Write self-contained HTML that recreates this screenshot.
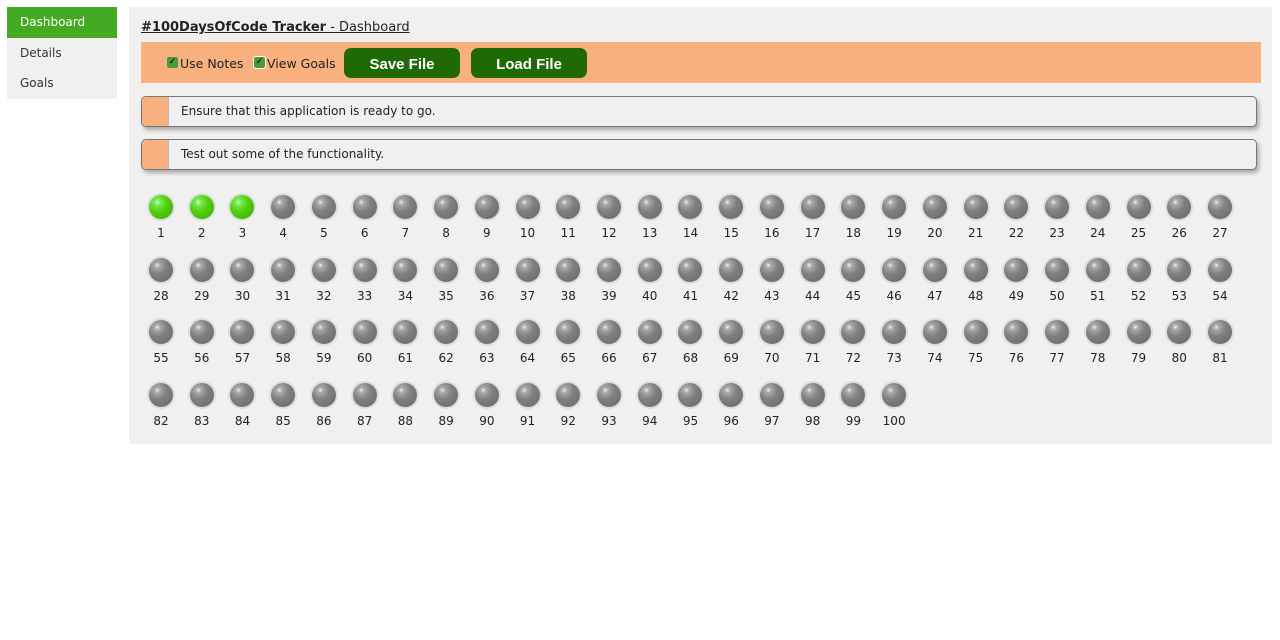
<!DOCTYPE html>
<html><head><style>
*{box-sizing:border-box}
body{margin:0;background:#fff;font-family:"DejaVu Sans",Verdana,sans-serif;font-size:12px;color:#222;width:1280px;height:640px;position:relative;overflow:hidden}
.nav{position:absolute;left:7px;top:7px;width:110px;background:#f0f0f0}
.nav div{height:30.5px;line-height:30px;padding-left:13px;color:#333;font-size:12px}
.nav .act{background:#44aa22;color:#fff}
.main{position:absolute;left:129px;top:7px;width:1143px;height:437px;background:#f0f0f0}
.title{position:absolute;left:12px;top:13px;font-size:13px;text-decoration:underline}
.bar{position:absolute;left:12px;top:35px;width:1120px;height:41px;background:#f8b07e}
.cb{position:absolute;top:15px;width:11px;height:11px;background:#4a9a3a;border-radius:2px;color:#000;font-size:9px;line-height:11px;text-align:center}
.lbl{position:absolute;top:14px;font-size:12.5px;color:#222}
.btn{position:absolute;top:6px;width:116px;height:30px;background:#1f6a06;border-radius:7px;color:#fff;font-family:"Liberation Sans",Arial,sans-serif;font-weight:bold;font-size:15px;text-align:center;line-height:33px}
.card{position:absolute;left:12px;width:1116px;height:31px;background:#f0f0f0;border:1px solid #777;border-radius:5px;box-shadow:2px 3px 4px rgba(0,0,0,.3);overflow:hidden}
.card .o{position:absolute;left:0;top:0;bottom:0;width:27px;background:#f8b07e;border-right:1px solid #bbb}
.card span{position:absolute;left:39px;top:7px;font-size:12px}
.d{position:absolute;width:40px;text-align:center}
.b{margin:0 auto;width:28px;height:28px;border-radius:50%;background:#ddd;padding:2px}
.b i{display:block;width:24px;height:24px;border-radius:50%;background:radial-gradient(circle at 35% 30%,#eee 0,#aaa 12%,#808080 40%,#666 100%)}
.b.g i{background:radial-gradient(circle at 35% 30%,#efe 0,#7e5 12%,#55d010 40%,#3a0 100%)}
.d div.n{margin-top:5px;font-size:12px;color:#222}
</style></head><body>
<div class="nav"><div class="act">Dashboard</div><div>Details</div><div>Goals</div></div>
<div class="main">
<div class="title"><b>#100DaysOfCode Tracker</b> - Dashboard</div>
<div class="bar">
<div class="cb" style="left:26px">✓</div><div class="lbl" style="left:39px">Use Notes</div>
<div class="cb" style="left:113px;outline:1px solid #fff">✓</div><div class="lbl" style="left:126px">View Goals</div>
<div class="btn" style="left:203px">Save File</div>
<div class="btn" style="left:330px">Load File</div>
</div>
<div class="card" style="top:89px"><div class="o"></div><span>Ensure that this application is ready to go.</span></div>
<div class="card" style="top:132px"><div class="o"></div><span>Test out some of the functionality.</span></div>
<div id="g"></div>
</div>
<script>
var h='';
for(var i=0;i<100;i++){var r=Math.floor(i/27),c=i%27;
var x=12+c*40.73,y=186+r*62.7;
h+='<div class="d" style="left:'+x+'px;top:'+y+'px"><div class="b'+(i<3?' g':'')+'"><i></i></div><div class="n">'+(i+1)+'</div></div>';}
document.getElementById('g').innerHTML=h;
</script>
</body></html>
